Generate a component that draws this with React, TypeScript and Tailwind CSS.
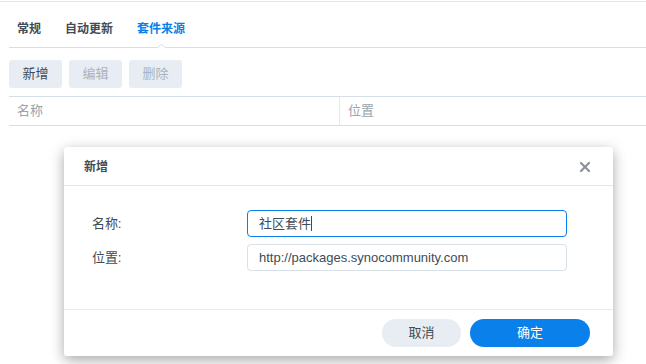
import { X } from "lucide-react";

const font = { fontFamily: "Roboto, 'Noto Sans CJK SC', sans-serif" };

const tabs = ["常规", "自动更新", "套件来源"];

const AddDialog = () => {
  return (
    <div className="absolute left-[64px] top-[147px] w-[549px] h-[209px] bg-white rounded-[3px] shadow-[0_4px_14px_rgba(0,0,0,0.35)] flex flex-col">
      <div className="h-[39px] flex items-center justify-between pl-[20px] pr-[20px] pt-[1px] border-b border-[#dfe5eb]">
        <span className="text-[12px] font-bold text-[#414b55]">新增</span>
        <X className="h-[16px] w-[16px] text-[#8a929b]" strokeWidth={3.2} />
      </div>
      <div className="flex-1 pl-[28px] pt-[24px] flex flex-col gap-[7px] border-b border-[#e6eaee]">
        <div className="flex items-center">
          <span className="w-[155px] text-[13px] text-[#414b55]">名称:</span>
          <div className="w-[320px] h-[27px] border border-[#0a7ee8] rounded-[4px] px-[11px] flex items-center text-[13px] text-[#414b55]">
            社区套件<span className="w-px h-[15px] bg-[#414b55]" />
          </div>
        </div>
        <div className="flex items-center">
          <span className="w-[155px] text-[13px] text-[#414b55]">位置:</span>
          <div className="w-[320px] h-[27px] border border-[#d8e0e8] rounded-[4px] px-[11px] flex items-center text-[13px] text-[#414b55] font-['Liberation_Sans',sans-serif]">
            http://packages.synocommunity.com
          </div>
        </div>
      </div>
      <div className="h-[46px] flex items-center justify-end gap-[9px] pr-[23px]">
        <button className="w-[79px] h-[28px] rounded-full bg-[#e8edf3] text-[13px] text-[#414b55]">取消</button>
        <button className="w-[120px] h-[28px] rounded-full bg-[#0a80ea] text-[13px] text-white">确定</button>
      </div>
    </div>
  );
};

export default function App() {
  return (
    <div className="relative w-[646px] h-[364px] bg-white overflow-hidden" style={font}>
      <div className="h-[2px] border-t border-[#e4e7ea] mt-px" />
      <div className="pl-[9px]">
        <div className="relative flex h-[45px] items-center gap-[24px] pl-[8px] pt-[7px] border-b border-[#d6dfe8]">
          {tabs.map((t, i) => (
            <span
              key={t}
              className={i === 2 ? "text-[12px] font-bold text-[#0a7ee8]" : "text-[12px] font-bold text-[#414b55]"}
            >
              {t}
            </span>
          ))}
          <span className="absolute left-[148px] bottom-[-1px] w-[9px] h-[5px]">
            <svg width="9" height="6" viewBox="0 0 9 6">
              <path d="M0 5.5 L4.5 1 L9 5.5" fill="white" stroke="#d6dfe8" strokeWidth="1" />
            </svg>
          </span>
        </div>
        <div className="flex gap-[7px] pt-[12px] pb-[8px]">
          <button className="w-[53px] h-[28px] rounded-[3px] bg-[#e8edf3] text-[13px] text-[#414b55]">新增</button>
          <button className="w-[53px] h-[28px] rounded-[3px] bg-[#e8edf3] text-[13px] text-[#aab3bc]">编辑</button>
          <button className="w-[53px] h-[28px] rounded-[3px] bg-[#e8edf3] text-[13px] text-[#aab3bc]">删除</button>
        </div>
        <div className="flex h-[30px] border-t border-b border-[#d6dfe8] text-[13px] text-[#9aa3ad]">
          <div className="w-[331px] flex items-center pl-[8px] border-r border-[#e4e9ee]">名称</div>
          <div className="flex-1 flex items-center pl-[8px]">位置</div>
        </div>
      </div>
      <AddDialog />
    </div>
  );
}
